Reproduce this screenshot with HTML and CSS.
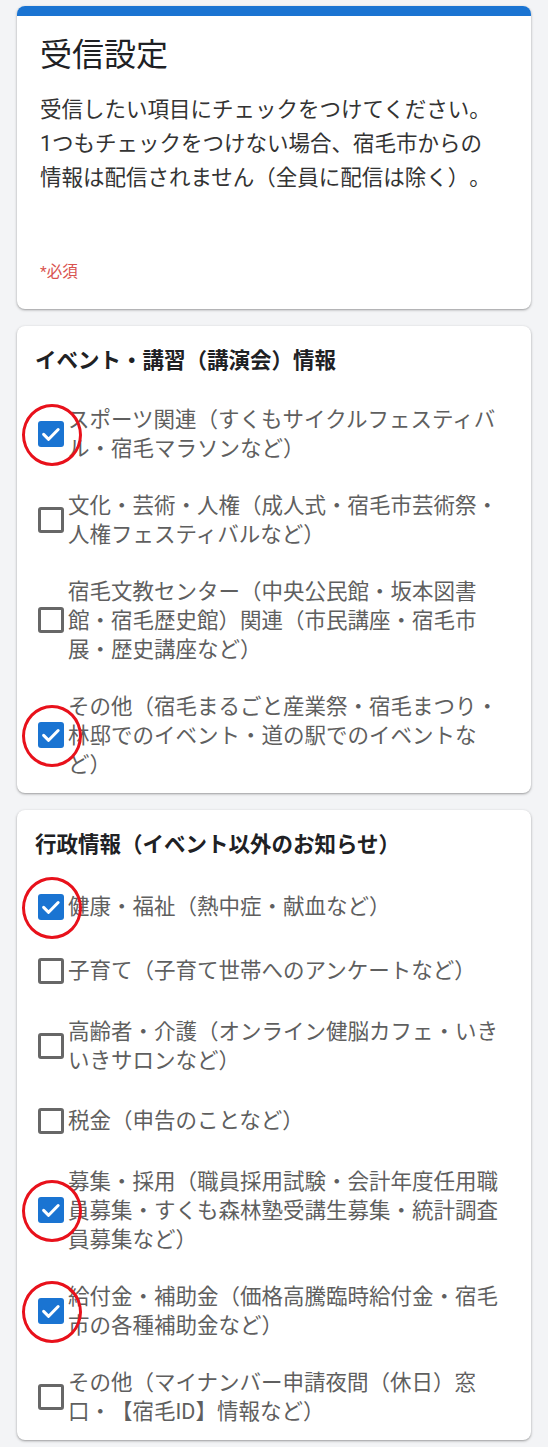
FILE: index.html
```html
<!DOCTYPE html>
<html lang="ja">
<head>
<meta charset="utf-8">
<title>受信設定</title>
<link rel="stylesheet" href="styles.css">
</head>
<body>
<main class="page">
  <section class="card intro">
    <div class="intro-bar"></div>
    <div class="intro-body">
      <h1 class="title">受信設定</h1>
      <p class="desc">受信したい項目にチェックをつけてください。<br>1つもチェックをつけない場合、宿毛市からの<br>情報は配信されません（全員に配信は除く）。</p>
      <p class="required">*必須</p>
    </div>
  </section>

  <section class="card question">
    <h2 class="q-title">イベント・講習（講演会）情報</h2>
    <ul class="options">
      <li class="option">
        <span class="box checked"><svg viewBox="0 0 24 24"><path d="M5.2 12.4l4.6 4.5 8.8-9"/></svg><span class="mark"></span></span>
        <span class="label">スポーツ関連（すくもサイクルフェスティバル・宿毛マラソンなど）</span>
      </li>
      <li class="option">
        <span class="box"></span>
        <span class="label">文化・芸術・人権（成人式・宿毛市芸術祭・人権フェスティバルなど）</span>
      </li>
      <li class="option">
        <span class="box"></span>
        <span class="label">宿毛文教センター（中央公民館・坂本図書館・宿毛歴史館）関連（市民講座・宿毛市展・歴史講座など）</span>
      </li>
      <li class="option">
        <span class="box checked"><svg viewBox="0 0 24 24"><path d="M5.2 12.4l4.6 4.5 8.8-9"/></svg><span class="mark"></span></span>
        <span class="label">その他（宿毛まるごと産業祭・宿毛まつり・林邸でのイベント・道の駅でのイベントなど）</span>
      </li>
    </ul>
  </section>

  <section class="card question">
    <h2 class="q-title">行政情報（イベント以外のお知らせ）</h2>
    <ul class="options">
      <li class="option">
        <span class="box checked"><svg viewBox="0 0 24 24"><path d="M5.2 12.4l4.6 4.5 8.8-9"/></svg><span class="mark"></span></span>
        <span class="label">健康・福祉（熱中症・献血など）</span>
      </li>
      <li class="option">
        <span class="box"></span>
        <span class="label">子育て（子育て世帯へのアンケートなど）</span>
      </li>
      <li class="option">
        <span class="box"></span>
        <span class="label">高齢者・介護（オンライン健脳カフェ・いきいきサロンなど）</span>
      </li>
      <li class="option">
        <span class="box"></span>
        <span class="label">税金（申告のことなど）</span>
      </li>
      <li class="option">
        <span class="box checked"><svg viewBox="0 0 24 24"><path d="M5.2 12.4l4.6 4.5 8.8-9"/></svg><span class="mark"></span></span>
        <span class="label">募集・採用（職員採用試験・会計年度任用職員募集・すくも森林塾受講生募集・統計調査員募集など）</span>
      </li>
      <li class="option">
        <span class="box checked"><svg viewBox="0 0 24 24"><path d="M5.2 12.4l4.6 4.5 8.8-9"/></svg><span class="mark"></span></span>
        <span class="label">給付金・補助金（価格高騰臨時給付金・宿毛市の各種補助金など）</span>
      </li>
      <li class="option">
        <span class="box"></span>
        <span class="label">その他（マイナンバー申請夜間（休日）窓口・【宿毛ID】情報など）</span>
      </li>
    </ul>
  </section>
</main>
</body>
</html>
```

FILE: styles.css
```css
html, body {
  margin: 0;
  padding: 0;
  background: #f3f4f6;
}

body {
  font-family: Roboto, "Noto Sans CJK JP", sans-serif;
  color: #202124;
  text-spacing-trim: space-all;
}

.page {
  padding: 6px 17px 8px;
  display: flex;
  flex-direction: column;
  gap: 17px;
}

.card {
  background: #ffffff;
  border-radius: 8px;
  box-shadow: 0 1px 2px rgba(0, 0, 0, 0.28), 0 1px 3px 1px rgba(0, 0, 0, 0.08);
  overflow: hidden;
}

.intro-bar {
  height: 10px;
  background: #1a74d2;
}

.intro-body {
  padding: 19px 23px 26.5px;
}

.title {
  margin: 0;
  font-size: 32px;
  line-height: 40px;
  font-weight: 400;
  color: #202124;
}

.desc {
  margin: 18px 0 0;
  font-size: 21.5px;
  line-height: 34px;
  color: #333333;
}

.required {
  margin: 67px 0 0;
  font-size: 15.5px;
  line-height: 20px;
  color: #d9534f;
}

.question {
  padding: 20px 20px 14px 18px;
}

.q-title {
  margin: 0 0 30px;
  font-size: 21.5px;
  line-height: 29px;
  font-weight: 700;
  color: #202124;
}

.options {
  list-style: none;
  margin: 0;
  padding: 0;
  display: flex;
  flex-direction: column;
  gap: 28px;
}

.option {
  display: flex;
  align-items: center;
  min-height: 36px;
}

.box {
  position: relative;
  flex: 0 0 auto;
  box-sizing: border-box;
  width: 26px;
  height: 26px;
  margin-left: 3px;
  border: 3px solid #676767;
  border-radius: 3px;
}

.box.checked {
  border: none;
  background: #1a74d2;
}

.box svg {
  display: block;
  width: 26px;
  height: 26px;
}

.box svg path {
  fill: none;
  stroke: #ffffff;
  stroke-width: 2.8;
  stroke-linecap: round;
  stroke-linejoin: round;
}

.mark {
  position: absolute;
  left: -16px;
  top: -17px;
  width: 60px;
  height: 62px;
  box-sizing: border-box;
  border: 3px solid #e8111b;
  border-radius: 50%;
}

.label {
  margin-left: 4px;
  font-size: 21.5px;
  line-height: 29px;
  color: #5f5f5f;
}
```
